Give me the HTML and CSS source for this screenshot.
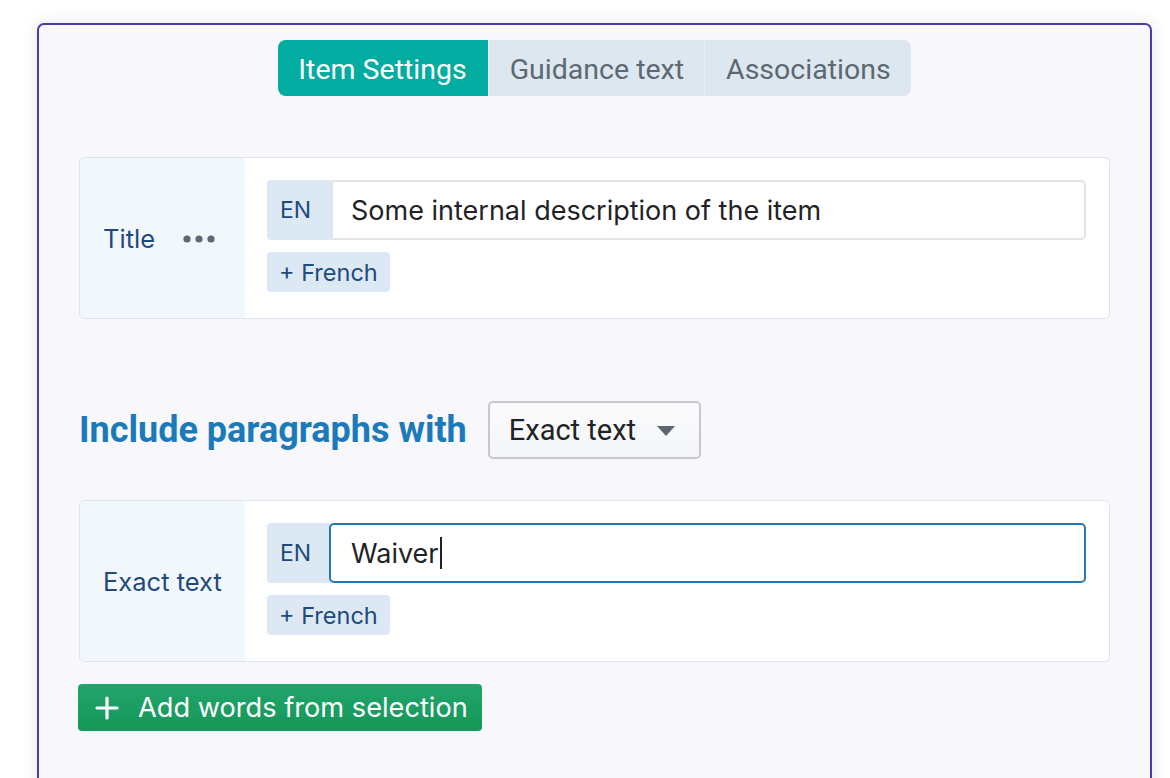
FILE: index.html
```html
<!DOCTYPE html>
<html>
<head>
<meta charset="utf-8">
<link rel="stylesheet" href="styles.css">
</head>
<body>
<div class="panel">
  <div class="tabs">
    <div class="tab active">Item Settings</div>
    <div class="tab">Guidance text</div>
    <div class="tab">Associations</div>
  </div>

  <div class="card card-first">
    <div class="card-label">
      <span>Title</span>
      <svg class="dots" width="34" height="10" viewBox="0 0 34 10"><circle cx="5" cy="5" r="3.6"/><circle cx="17" cy="5" r="3.6"/><circle cx="29" cy="5" r="3.6"/></svg>
    </div>
    <div class="card-body">
      <div class="input-group">
        <div class="lang">EN</div>
        <div class="field">Some internal description of the item</div>
      </div>
      <div class="add-lang">+ French</div>
    </div>
  </div>

  <div class="heading-row">
    <h2 class="heading">Include paragraphs with</h2>
    <div class="select">
      <span>Exact text</span>
      <svg class="caret" width="18" height="10" viewBox="0 0 18 10"><path d="M0 0H18L9 10Z"/></svg>
    </div>
  </div>

  <div class="card">
    <div class="card-label">
      <span>Exact text</span>
    </div>
    <div class="card-body">
      <div class="input-group">
        <div class="lang">EN</div>
        <div class="field focused">Waiver<span class="cursor"></span></div>
      </div>
      <div class="add-lang">+ French</div>
    </div>
  </div>

  <div class="btn-add">
    <svg width="24" height="24" viewBox="0 0 24 24"><path d="M12 2V22M2 12H22" stroke="#fff" stroke-width="3.2" stroke-linecap="round"/></svg>
    <span>Add words from selection</span>
  </div>
</div>
</body>
</html>
```

FILE: styles.css
```css
* { box-sizing: border-box; }
html, body { margin: 0; padding: 0; background: #ffffff; overflow: hidden; }
body { font-family: Inter, "Noto Sans", sans-serif; }

.panel {
  margin: 23px 0 0 37px;
  width: 1115px;
  min-height: 820px;
  background: #f7f7fc;
  border: 2px solid #4a3ab0;
  border-radius: 7px;
  box-shadow: 0 0 18px rgba(0,0,0,0.10);
  padding: 15px 40px 0 40px;
}

.tabs {
  display: flex;
  justify-content: center;
  margin: 0 auto;
  width: max-content;
  border-radius: 8px;
  overflow: hidden;
  background: #dde7ef;
}
.tab {
  height: 56px;
  display: flex;
  align-items: center;
  padding: 3px 20px 0 21px;
  font-family: Roboto, sans-serif;
  font-size: 28.5px;
  color: #5d6872;
  border-left: 1px solid #e6edf3;
}
.tab.active {
  background: #03aca1;
  color: #ffffff;
  border-left: none;
  padding: 3px 21px 0 20px;
}

.card {
  display: flex;
  width: 1031px;
  border: 1px solid #dde5ee;
  border-radius: 5px;
  background: #ffffff;
  overflow: hidden;
}
.card-first { margin-top: 61px; }
.card-label {
  width: 165px;
  flex: none;
  background: #f2f7fc;
  display: flex;
  align-items: center;
  padding-left: 23px;
  font-size: 25.5px;
  color: #1e4a7c;
}
.dots { fill: #5e6975; margin-left: 27px; margin-top: 2px; }
.card-body {
  flex: 1;
  padding: 22px 23px 26px 22px;
}
.input-group {
  display: flex;
  height: 60px;
}
.lang {
  width: 64px;
  flex: none;
  background: #dce9f5;
  border-radius: 4px 0 0 4px;
  display: flex;
  align-items: center;
  padding-left: 13px;
  font-size: 23px;
  color: #1e4a7c;
}
.field {
  flex: 1;
  border: 2px solid #e3e4e6;
  border-radius: 0 5px 5px 0;
  display: flex;
  align-items: center;
  padding-left: 18px;
  font-size: 27px;
  color: #1f2226;
}
.field.focused {
  border-color: #2778b0;
  border-radius: 5px;
  margin-left: -2px;
  padding-left: 20px;
}
.cursor {
  display: inline-block;
  width: 2px;
  height: 32px;
  background: #1f2226;
  margin-left: 1px;
}
.add-lang {
  margin-top: 12px;
  width: max-content;
  height: 40px;
  display: flex;
  align-items: center;
  padding: 0 12px 0 12px;
  background: #dce9f5;
  border-radius: 4px;
  font-size: 23.5px;
  color: #1e4a7c;
}

.heading-row {
  display: flex;
  align-items: center;
  margin-top: 82px;
  margin-bottom: 41px;
  height: 58px;
}
.heading {
  margin: 0;
  font-family: Roboto, sans-serif;
  font-weight: 700;
  font-size: 36px;
  color: #1b7ab9;
  margin-right: 21px;
}
.select {
  height: 58px;
  width: 213px;
  border: 2px solid #c5c9cd;
  border-radius: 5px;
  background: linear-gradient(#fbfbfc, #f3f5f7);
  display: flex;
  align-items: center;
  padding-left: 19px;
  font-family: Roboto, sans-serif;
  font-size: 29px;
  color: #1f2226;
}
.caret { fill: #5c6670; margin-left: 21px; margin-top: 2px; }

.btn-add {
  margin-top: 22px;
  margin-left: -1px;
  width: max-content;
  height: 47px;
  display: flex;
  align-items: center;
  padding: 0 14px 0 17px;
  background: linear-gradient(#22a56c, #169658);
  border-radius: 4px;
  color: #ffffff;
  font-size: 27.2px;
}
.btn-add svg { margin-right: 19px; }
```
